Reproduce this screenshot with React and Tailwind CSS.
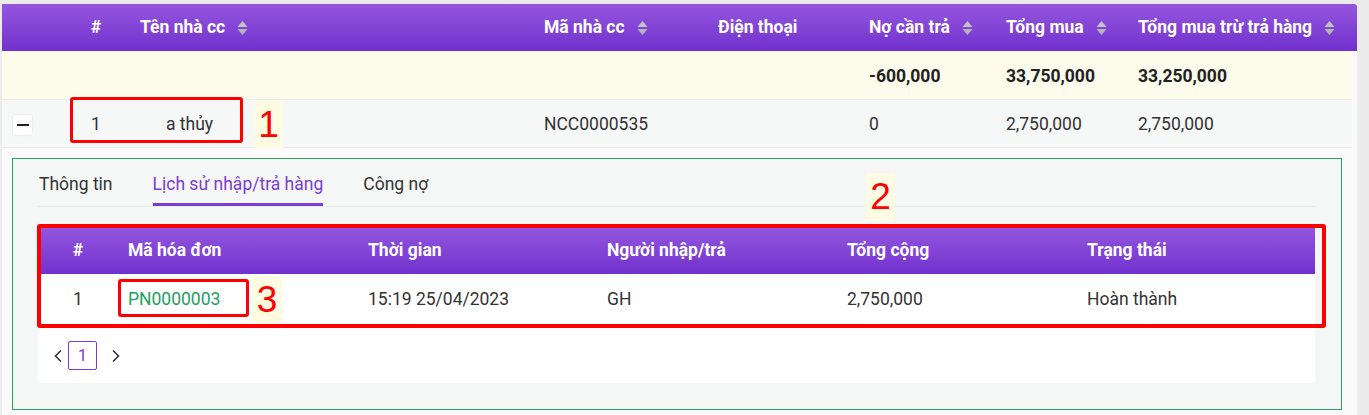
import React from 'react';

function SortIcon() {
  return (
    <svg width="11" height="16" viewBox="0 0 11 16" className="ml-[12px] shrink-0">
      <path d="M0.5 7 L5.5 1 L10.5 7 Z" fill="#c2c2c2" />
      <path d="M0.5 9 L5.5 15 L10.5 9 Z" fill="#b5b5b5" />
    </svg>
  );
}

function Chevron({ dir }) {
  return (
    <svg width="10" height="14" viewBox="0 0 10 14" fill="none" stroke="#333" strokeWidth="1.6">
      {dir === 'left' ? <path d="M8 1.5 L2.5 7 L8 12.5" /> : <path d="M2 1.5 L7.5 7 L2 12.5" />}
    </svg>
  );
}

const mainCols = 'grid grid-cols-[60px_68px_404px_174px_151px_137px_132px_1fr]';
const subCols = 'grid grid-cols-[80px_240px_239px_240px_240px_1fr]';

export default function App() {
  return (
    <div className="relative min-h-screen w-[1369px] bg-[#ebebeb] pt-[4px] pl-[2px] font-[Roboto,sans-serif] text-[17.5px] text-[#333]">
      <div className="w-[1355px] bg-[#fafafa] overflow-hidden">
        {/* table header */}
        <div className={`${mainCols} h-[47px] items-center bg-gradient-to-b from-[#9455de] to-[#7230ce] text-white font-bold rounded-tr-[3px]`}>
          <div />
          <div className="text-center">#</div>
          <div className="flex items-center pl-[10px]">Tên nhà cc<SortIcon /></div>
          <div className="flex items-center pl-[10px]">Mã nhà cc<SortIcon /></div>
          <div className="pl-[10px]">Điện thoại</div>
          <div className="flex items-center pl-[10px]">Nợ cần trả<SortIcon /></div>
          <div className="flex items-center pl-[10px]">Tổng mua<SortIcon /></div>
          <div className="flex items-center pl-[10px]">Tổng mua trừ trả hàng<SortIcon /></div>
        </div>

        {/* totals */}
        <div className={`${mainCols} w-[1350px] h-[49px] items-center pt-[2px] bg-[#fdfbec] font-bold text-[#222] border-b border-[#ececec]`}>
          <div />
          <div />
          <div />
          <div />
          <div />
          <div className="pl-[10px]">-600,000</div>
          <div className="pl-[10px]">33,750,000</div>
          <div className="pl-[10px]">33,250,000</div>
        </div>

        {/* data row */}
        <div className={`${mainCols} w-[1350px] h-[48px] items-center pt-[2px] bg-[#f6f7f7] border-b border-[#ececec]`}>
          <div className="pl-[11px]">
            <div className="flex h-[20px] w-[19px] items-center justify-center rounded-[2px] bg-white shadow-[0_0_2px_rgba(0,0,0,0.15)]">
              <div className="h-[2px] w-[12px] bg-[#222]" />
            </div>
          </div>
          <div className="text-center">1</div>
          <div className="pl-[36px]">a thủy</div>
          <div className="pl-[10px]">NCC0000535</div>
          <div />
          <div className="pl-[10px]">0</div>
          <div className="pl-[10px]">2,750,000</div>
          <div className="pl-[10px]">2,750,000</div>
        </div>

        {/* expanded */}
        <div className="px-[10px] pt-[10px] pb-[6px]">
          <div className="w-[1330px] border border-[#2aa35c] bg-[#f5f7f6] px-[25px] pb-[26px]">
            <div className="flex gap-[40px] border-b border-[#e9eaea] pl-[1px] pt-[14px]">
              <div className="pb-[11px] leading-[22px]">Thông tin</div>
              <div className="border-b-[3px] border-[#7a3dd3] pb-[8px] leading-[22px] text-[#7a3dd3]">Lịch sử nhập/trả hàng</div>
              <div className="pb-[11px] leading-[22px]">Công nợ</div>
            </div>

            <div className="mt-[20px] w-[1277px] bg-white">
              <div className={`${subCols} h-[47px] items-center bg-gradient-to-b from-[#9455de] to-[#7230ce] text-white font-bold`}>
                <div className="text-center">#</div>
                <div className="pl-[10px]">Mã hóa đơn</div>
                <div className="pl-[10px]">Thời gian</div>
                <div className="pl-[10px]">Người nhập/trả</div>
                <div className="pl-[10px]">Tổng cộng</div>
                <div className="pl-[10px]">Trạng thái</div>
              </div>
              <div className={`${subCols} h-[48px] items-center pt-[3px]`}>
                <div className="text-center">1</div>
                <div className="pl-[10px] text-[#22a05f]">PN0000003</div>
                <div className="pl-[10px]">15:19 25/04/2023</div>
                <div className="pl-[10px]">GH</div>
                <div className="pl-[10px]">2,750,000</div>
                <div className="pl-[10px]">Hoàn thành</div>
              </div>
              <div className="flex items-center pl-[10px] pt-[19px] pb-[13px]">
                <span className="flex w-[20px] justify-center"><Chevron dir="left" /></span>
                <span className="flex h-[29px] w-[29px] items-center justify-center rounded-[2px] border border-[#7a3dd3] text-[16px] text-[#7a3dd3]">1</span>
                <span className="ml-[9px] flex w-[20px] justify-center"><Chevron dir="right" /></span>
              </div>
            </div>
          </div>
        </div>
      </div>

      {/* annotations */}
      <div className="absolute left-[70px] top-[97px] h-[46px] w-[173px] rounded-[3px] border-[3px] border-[#ff0000]" />
      <div className="absolute left-[254px] top-[101px] flex h-[47px] w-[29px] items-center justify-center bg-[#fdfbe2] font-[Liberation_Sans,sans-serif] text-[37px] text-[#ff0000]">1</div>
      <div className="absolute left-[866px] top-[173px] flex h-[48px] w-[29px] items-center justify-center bg-[#fdfbe2] font-[Liberation_Sans,sans-serif] text-[37px] text-[#ff0000]">2</div>
      <div className="absolute left-[37px] top-[224px] h-[104px] w-[1289px] rounded-[3px] border-[4px] border-[#ff0000]" />
      <div className="absolute left-[118px] top-[279px] h-[38px] w-[131px] rounded-[3px] border-[3px] border-[#ff0000]" />
      <div className="absolute left-[252px] top-[276px] flex h-[47px] w-[30px] items-center justify-center bg-[#fdfbe2] font-[Liberation_Sans,sans-serif] text-[37px] text-[#ff0000]">3</div>
    </div>
  );
}
